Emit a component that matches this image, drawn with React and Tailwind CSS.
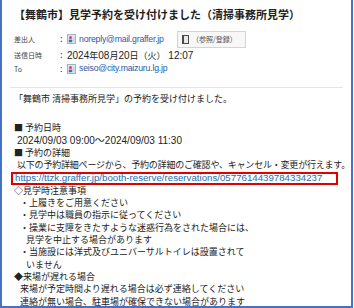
import React from "react";

const jp = { fontFamily: '"Noto Sans CJK JP", sans-serif' };

const ContactIcon = () => (
  <svg width="9" height="10" viewBox="0 0 9 10" className="shrink-0">
    <rect x="0.5" y="0.5" width="8" height="9" fill="#dbe6f4" stroke="#9fb4cf" />
    <circle cx="3.5" cy="3.6" r="1.5" fill="#e0463c" />
    <rect x="1.8" y="5.6" width="3.4" height="2.6" fill="#3f6fb0" />
    <rect x="6" y="3" width="1.6" height="4.6" fill="#c8d3e2" />
  </svg>
);

const BookIcon = () => (
  <svg width="7" height="9" viewBox="0 0 7 9">
    <rect x="0" y="0" width="7" height="9" fill="#4a4a4a" />
    <rect x="2" y="1" width="4" height="7" fill="#e8e8e8" />
  </svg>
);

const Latin = ({ children, className = "text-[10px]" }) => (
  <span
    className={className}
    style={{ fontFamily: '"Liberation Sans", "Noto Sans CJK JP", sans-serif' }}
  >
    {children}
  </span>
);

const HeaderRow = ({ label, children }) => (
  <div className="flex items-center h-[14px]">
    <div className="w-[46px] text-[7px] text-[#444]">{label}</div>
    <div className="w-[7px] text-[9px] text-[#444]">:</div>
    <div className="flex items-center gap-[3px] text-[9px] text-[#222]">{children}</div>
  </div>
);

export default function App() {
  return (
    <div className="w-[354px] h-[308px] bg-white overflow-hidden" style={jp}>
      <div className="w-[353px] h-[308px] border-l-2 border-r-2 border-b-2 border-[#4472c4] pl-[12px] pr-[6px]">
        <div className="pt-[6px] h-[28px] text-[11px] font-bold text-[#222] leading-[16px]">
          【舞鶴市】見学予約を受け付けました（清掃事務所見学）
        </div>

        <div className="flex flex-col mt-[4px]">
          <HeaderRow label="差出人">
            <ContactIcon />
            <div className="w-[95px] whitespace-nowrap">
              <Latin className="text-[#2a5aa8] text-[8.7px] tracking-[-0.2px]">noreply@mail.graffer.jp</Latin>
            </div>
            <div className="flex items-center gap-[3px] h-[17px] w-[69px] border border-[#d4d4d4] bg-[#f7f7f7] pl-[4px] text-[7px] text-[#555]">
              <BookIcon />
              <span>（参照/登録）</span>
            </div>
          </HeaderRow>
          <div className="h-[2px]" />
          <HeaderRow label="送信日時">
            <span>
              <Latin>2024</Latin>年<Latin>08</Latin>月<Latin>20</Latin>日（火）<Latin> 12:07</Latin>
            </span>
          </HeaderRow>
          <HeaderRow label="To">
            <ContactIcon />
            <Latin className="text-[#2a5aa8] text-[8.7px] tracking-[-0.2px]">seiso@city.maizuru.lg.jp</Latin>
          </HeaderRow>
        </div>

        <div className="mt-[11px] -ml-[4px] mr-[2px] h-px bg-[#e4e4e4]" />

        <div className="pt-[5px] text-[9px] leading-[12.35px] text-[#222]">
          <div>「舞鶴市 清掃事務所見学」の予約を受け付けました。</div>
          <div className="h-[17px]" />
          <div>■ 予約日時</div>
          <div className="pl-[3px]">
            <Latin>2024/09/03 09:00～2024/09/03 11:30</Latin>
          </div>
          <div>■ 予約の詳細</div>
          <div className="pl-[3px] whitespace-nowrap tracking-[-0.2px]">
            以下の予約詳細ページから、予約の詳細のご確認や、キャンセル・変更が行えます。
          </div>
          <div className="-ml-[3px] w-[327px] h-[13px] border-2 border-[#e00000] pl-[2px] flex items-center whitespace-nowrap">
            <Latin className="text-[#2a6cb0] text-[9.7px]">https://ttzk.graffer.jp/booth-reserve/reservations/0577614439784334237</Latin>
          </div>
          <div>◇見学時注意事項</div>
          <div className="pl-[6px]">・上履きをご用意ください</div>
          <div className="pl-[6px]">・見学中は職員の指示に従ってください</div>
          <div className="pl-[6px]">・操業に支障をきたすような迷惑行為をされた場合には、</div>
          <div className="pl-[12px]">見学を中止する場合があります</div>
          <div className="pl-[6px]">・当施設には洋式及びユニバーサルトイレは設置されて</div>
          <div className="pl-[12px]">いません</div>
          <div>◆来場が遅れる場合</div>
          <div className="pl-[6px]">来場が予定時間より遅れる場合は必ず連絡してください</div>
          <div className="pl-[6px]">連絡が無い場合、駐車場が確保できない場合があります</div>
        </div>
      </div>
    </div>
  );
}
